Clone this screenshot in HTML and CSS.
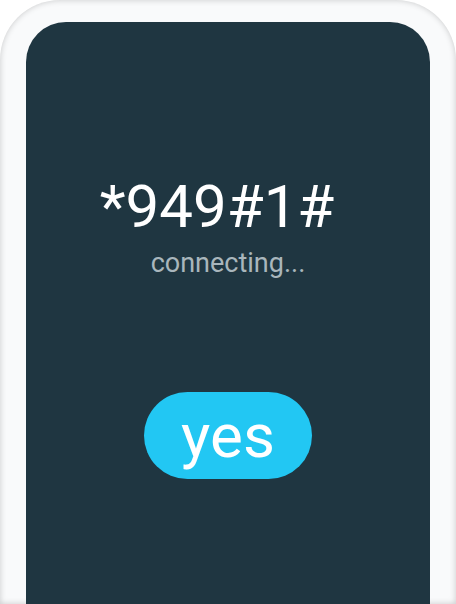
FILE: index.html
```html
<!DOCTYPE html>
<html lang="en">
<head>
    <meta charset="UTF-8">
    <meta name="viewport" content="width=device-width, initial-scale=1.0">
    <title>Dialing</title>
    <link rel="stylesheet" href="styles.css">
</head>
<body>
    <div class="phone">
        <div class="screen">
            <div class="number">*949#1#</div>
            <div class="status">connecting...</div>
            <button type="button" class="answer">yes</button>
        </div>
    </div>
</body>
</html>
```

FILE: styles.css
```css
body {
    margin: 0;
    padding: 0;
    background-color: #fff;
    font-family: 'Roboto', 'Liberation Sans', sans-serif;
}
.phone {
    width: 456px;
    height: 604px;
    box-sizing: border-box;
    padding: 22px 26px 0 26px;
    background: #f9fafb;
    border-radius: 60px 60px 0 0;
    box-shadow: inset 0 0 6px rgba(0, 0, 0, 0.2);
}
.screen {
    height: 100%;
    background-color: #1f3641;
    border-radius: 40px 40px 0 0;
    display: flex;
    flex-direction: column;
    align-items: center;
    padding-top: 155px;
    box-sizing: border-box;
}
.number {
    margin-right: 22px;
    color: #fff;
    font-size: 60px;
    line-height: 1;
}
.status {
    margin-top: 13px;
    color: #a9b6bc;
    font-size: 27px;
    line-height: 1;
}
.answer {
    margin-top: 115px;
    width: 168px;
    height: 87px;
    border: none;
    border-radius: 44px;
    background-color: #22c7f3;
    color: #fff;
    font-family: inherit;
    font-size: 62px;
    line-height: 1;
    padding: 0;
    cursor: pointer;
}
```
